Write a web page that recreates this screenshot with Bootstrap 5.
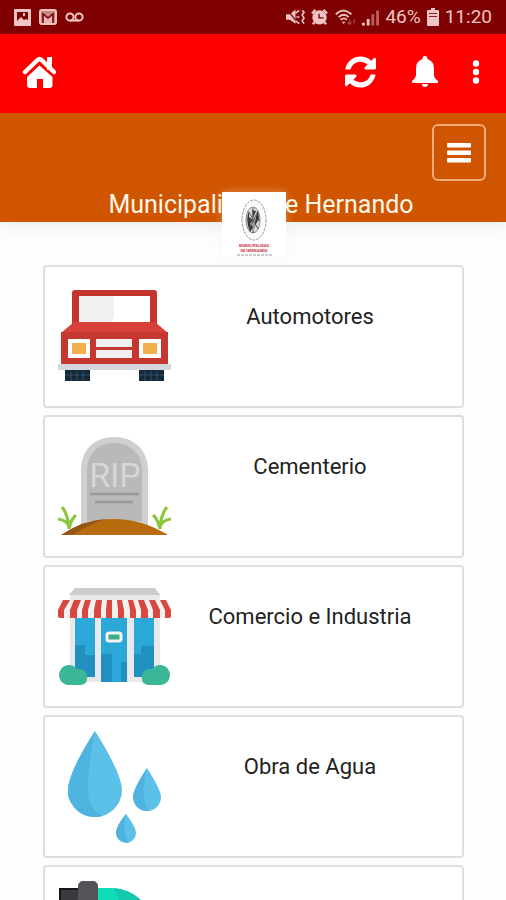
<!DOCTYPE html>
<html lang="es">
<head>
<meta charset="utf-8">
<meta name="viewport" content="width=device-width, initial-scale=1">
<title>Municipalidad de Hernando</title>
<link href="https://cdn.jsdelivr.net/npm/bootstrap@5.3.0/dist/css/bootstrap.min.css" rel="stylesheet">
<style>
  body { font-family: Roboto, "Liberation Sans", sans-serif; background: #fdfdfd; }
  svg { display: block; flex-shrink: 0; }
  .status-strip { height: 34px; background: #7f0000; color: #efc4c4; font-size: 19px; line-height: 34px; padding: 0 14px; }
  .status-icons { gap: 6px; }
  .app-bar { height: 79px; background: #ff0000; padding: 0 24px 4px 21px; }
  .app-bar .btn { color: #fff; line-height: 0; }
  .brand-bar { background: #d05500; box-shadow: 0 6px 16px rgba(0, 0, 0, .06); padding: 11px 20px 0; }
  .menu-toggle { width: 54px; height: 57px; border: 2px solid #f0ad7b; border-radius: 6px; color: #fff; }
  .brand-title { font-size: 25px; line-height: 32px; padding: 8px 0 1px 16px; color: #fff8ea; }
  .brand-logo { bottom: -35px; left: 50%; width: 64px; margin-left: -31px; background: #fff; box-shadow: 0 0 8px rgba(255, 240, 220, .35); }
  .service-list { padding: 43px 42px 0 43px; gap: 7px; scrollbar-width: none; }
  .service-list::-webkit-scrollbar { display: none; }
  .service-item { min-height: 143px; border: 2px solid #dedede; border-radius: 4px; padding: 13px; background: #fff; color: #222; font-size: 22px; line-height: 28px; }
  .service-name { padding-top: 23px; }
</style>
</head>
<body>
<div class="vh-100 d-flex flex-column overflow-hidden">
  <div class="status-strip d-flex align-items-center flex-shrink-0">
    <div class="d-flex align-items-center gap-2">
      <svg width="17" height="17" viewBox="0 0 17 17"><path fill="#efc4c4" fill-rule="evenodd" d="M1 0h15q1 0 1 1v15q0 1-1 1H1q-1 0-1-1V1q0-1 1-1zM3 3v9l4-4 3 3 2-1 2 1V3zM9 4h2v3H9z"/></svg>
      <svg width="18" height="16" viewBox="0 0 18 16"><rect x="1" y="1" width="16" height="14" rx="2" fill="#c98787" stroke="#efc4c4" stroke-width="2"/><path d="M4 14V5l5 4 5-4v9" fill="#e6b4b4" stroke="#7f0000" stroke-width="1.600"/></svg>
      <svg width="19" height="10" viewBox="0 0 19 10" fill="none" stroke="#efc4c4" stroke-width="2"><circle cx="5" cy="5" r="3.600"/><circle cx="14" cy="5" r="3.600"/><path d="M5 8.600h9"/></svg>
    </div>
    <div class="status-icons d-flex align-items-center ms-auto">
      <svg width="19" height="18" viewBox="0 0 20 18" fill="#efc4c4"><path d="M0 6h4l6-5v15l-6-4H0z"/><path d="M1 1l12 15" stroke="#7f0000" stroke-width="1.400"/><path d="M10 5l4-3M11 9h3M10 13l4 3M17 2l2 2-2 3 2 3-2 3 2 3" fill="none" stroke="#efc4c4" stroke-width="1.700"/></svg>
      <svg width="17" height="18" viewBox="0 0 19 18"><circle cx="9.500" cy="9.500" r="8" fill="#efc4c4"/><path d="M1 5l4-4M14 1l4 4M4 15l-2 2M15 15l2 2" stroke="#efc4c4" stroke-width="2.500"/><path d="M9 5.500V10h5" fill="none" stroke="#7f0000" stroke-width="1.500"/></svg>
      <svg width="22" height="19" viewBox="0 0 24 19" fill="none" stroke="#efc4c4" stroke-width="2"><path d="M2 6q8-8 17 0M5 9q6-5 11 0M7 12q4-3 7 0"/><path d="M8.500 14h4l-2 2.500z" fill="#efc4c4" stroke="none"/><path d="M17 12v5M15 15l2 2 2-2M22 16v-5" stroke="#a84a4a" stroke-width="1.400"/></svg>
      <svg width="17" height="18" viewBox="0 0 18 18"><path fill="#efc4c4" d="M0 15h3v3H0zM5 11h3v7H5z"/><path fill="#b75f5f" d="M10 6h3v12h-3zM15 2h3v16h-3z"/></svg>
      <span>46%</span>
      <svg width="12" height="18" viewBox="0 0 12 18"><path fill="#efc4c4" d="M4 0h4v2h3q1 0 1 1v14q0 1-1 1H1q-1 0-1-1V3q0-1 1-1h3z"/><path fill="#8e2020" d="M2 5h8v1H2zM2 8h8v1H2z"/></svg>
      <span>11:20</span>
    </div>
  </div>

  <nav class="app-bar d-flex align-items-center flex-shrink-0" aria-label="Principal">
    <a class="btn border-0 p-0" href="#" aria-label="Inicio">
      <svg width="37" height="36" viewBox="0 0 37 36"><path d="M26 3h5v13h-5z" fill="#fff"/><path d="M4 18L16.500 6Q18.500 4 20.500 6L33 18" fill="none" stroke="#fff" stroke-width="4.500" stroke-linecap="round"/><path fill="#fff" d="M18.500 11.500L31.500 23v8q0 3-3 3H22v-9h-6v9H9q-3 0-3-3v-8z"/></svg>
    </a>
    <button class="btn border-0 p-0 ms-auto" type="button" aria-label="Actualizar">
      <svg width="31" height="32" viewBox="0 0 1536 1536" fill="currentColor"><path d="M1511 928q0 5-1 7-64 268-268 434.500T764 1536q-146 0-282.500-55T238 1324l-129 129q-19 19-45 19t-45-19-19-45V960q0-26 19-45t45-19h448q26 0 45 19t19 45-19 45l-137 137q71 66 161 102t187 36q134 0 250-65t186-179q11-17 53-117 8-23 30-23h192q13 0 22.500 9.500t9.500 22.500zM1536 128v448q0 26-19 45t-45 19h-448q-26 0-45-19t-19-45 19-45l138-138Q969 256 768 256q-134 0-250 65T332 500q-11 17-53 117-8 23-30 23H50q-13 0-22.500-9.500T18 608v-7q65-268 270-434.500T768 0q146 0 284 55.500T1297 212l130-129q19-19 45-19t45 19 19 45z"/></svg>
    </button>
    <button class="btn border-0 p-0 ms-4" type="button" aria-label="Notificaciones">
      <svg class="ms-2 ps-1" width="30" height="31" viewBox="0 0 26 31" fill="currentColor"><path d="M13 0q2.500 0 2.500 3Q22 5 22 13v6q0 3 4 6v2H0v-2q4-3 4-6v-6q0-8 6.500-10Q10.500 0 13 0zM10 28h6q0 3-3 3t-3-3z"/></svg>
    </button>
    <button class="btn border-0 p-0 ms-4" type="button" aria-label="Más opciones">
      <svg class="ms-2" width="12" height="24" viewBox="0 0 12 24" fill="currentColor"><circle cx="6" cy="3.500" r="3.200"/><circle cx="6" cy="12" r="3.200"/><circle cx="6" cy="20.500" r="3.200"/></svg>
    </button>
  </nav>

  <header class="brand-bar position-relative z-1 flex-shrink-0">
    <div class="d-flex justify-content-end">
      <button class="menu-toggle btn p-0 d-flex align-items-center justify-content-center" type="button" aria-label="Menú">
        <svg width="24" height="20" viewBox="0 0 24 20" fill="currentColor"><rect width="24" height="4.500" rx="1"/><rect y="7.500" width="24" height="4.500" rx="1"/><rect y="15" width="24" height="4.500" rx="1"/></svg>
      </button>
    </div>
    <h1 class="brand-title text-center fw-normal m-0">Municipalidad de Hernando</h1>
    <div class="brand-logo position-absolute">
      <svg width="64" height="65" viewBox="0 0 64 65">
        <ellipse cx="32" cy="28" rx="12" ry="20" fill="#fafafa" stroke="#999" stroke-width="1" stroke-dasharray="3 1"/>
        <ellipse cx="31" cy="28" rx="7" ry="13" fill="#ddd" stroke="#888"/>
        <path d="M27 19q-4 9 1 21l3-5-3-3 3-4-4-3zM30 18l1 8 3-7zM34 24l2-5 1 8-3 5-2 5z" fill="#333"/>
        <path d="M31 16v25M25 28h13M27 20l9 17M36 19l-9 18" stroke="#555" stroke-width="1"/>
        <g text-anchor="middle" font-family="Roboto, sans-serif" font-weight="700" fill="#cc3347" font-size="4"><text x="32" y="55">MUNICIPALIDAD</text><text x="32" y="60">DE HERNANDO</text></g>
        <path d="M15 63h35" stroke="#999" stroke-dasharray="3 1"/>
      </svg>
    </div>
  </header>

  <main class="service-list d-flex flex-column flex-grow-1 overflow-auto">
    <a class="service-item d-flex flex-shrink-0 text-decoration-none" href="#">
      <svg width="113" height="113" viewBox="0 0 113 113">
        <path fill="#14293a" d="M7 89h25v12H7zM81 89h25v12H81z"/><path d="M7 95h25M81 95h25M13 91v10M19 91v10M25 91v10M87 91v10M93 91v10M99 91v10" stroke="#34506a" stroke-width="1"/>
        <path fill="#c5352e" d="M17 10h79q3 0 3 3v34H14V13q0-3 3-3z"/><path fill="#fff" d="M21 16h71v26H21z"/><path fill="#f0f1f3" d="M21 16h35v21l-3 5H21z"/>
        <path fill="#d8413a" d="M16 42h81l13 11H3z"/><path fill="#c63730" d="M3 52h107v33H3z"/>
        <path fill="#fff" d="M10 59h22v19H10zM81 59h22v19H81z"/><path fill="#f4b04d" d="M14 63h14v11H14zM85 63h14v11H85z"/>
        <path fill="#f0f0f3" d="M38 59h36v8H38zM38 70h36v8H38z"/><rect y="84" width="113" height="6" fill="#d4d7db"/>
      </svg>
      <span class="service-name flex-grow-1 text-center">Automotores</span>
    </a>
    <a class="service-item d-flex flex-shrink-0 text-decoration-none" href="#">
      <svg width="113" height="113" viewBox="0 0 113 113">
        <path fill="#cfcfcf" d="M23 96V41C23 19 37 7 56 7s34 12 34 34v55z"/><path fill="#b9b9b9" d="M29 91V41C29 23 41 13 56 13s28 10 28 28v50z"/>
        <text x="57" y="57" text-anchor="middle" font-family="Roboto, sans-serif" font-size="34" font-weight="400" fill="#d6d6d6">RIP</text>
        <path d="M32 64h49M37 72h38" stroke="#999" stroke-width="2.500"/>
        <path d="M11 99Q10 84 4 77M11 96Q8 90 0 89M11 99Q13 89 18 85M102 99Q103 84 109 77M102 96Q105 90 113 89M102 99Q100 89 95 85" fill="none" stroke="#8dc63f" stroke-width="3.200"/>
        <path fill="#b86b0c" d="M3 105Q28 89 56 89t54 16z"/><path fill="#955514" d="M3 105Q25 90 48 89 25 97 15 105z"/>
      </svg>
      <span class="service-name flex-grow-1 text-center">Cementerio</span>
    </a>
    <a class="service-item d-flex flex-shrink-0 text-decoration-none" href="#">
      <svg width="113" height="113" viewBox="0 0 113 113">
        <path fill="#e8e9eb" d="M12 13h90v89H12z"/><path fill="#ccc" d="M17 8h80l5 7H11z"/>
        <path fill="#2ba7d8" d="M17 38h20v59H17zM43 38h26v64H43zM76 38h20v59H76z"/><path fill="#218fc0" d="M17 65h10v10h10v22H17zM43 74h11v28H43zM63 82h6v20h-6zM76 74h7v-8h13v31H76z"/>
        <rect x="49" y="53" width="14" height="8" rx="2" fill="#3cad82" stroke="#f4f4f4" stroke-width="3"/>
        <path fill="#f1f1f2" d="M5 20h103l5 10v8H0v-8z"/>
        <path fill="#d9483f" d="M5 20h7L6 30v8H2q-2 0-2-2v-6zM16 20h7l-4 10v8h-7v-8zM27 20h6l-3 10v8h-6v-8zM38 20h6l-1 10v8h-7v-8zM49 20h5v18h-6V30zM59 20h5l2 10v8h-6v-8zM70 20h5l3 10v8h-6v-8zM80 20h6l4 10v8h-7v-8zM91 20h6l5 10v8h-7v-8zM102 20h6l5 10v6q0 2-2 2h-4v-8z"/>
        <path fill="#3ab796" d="M10 105A10 10 0 1 1 19 89q9-1 10 7t-6 9zM103 105A10 10 0 1 0 94 89q-9-1-10 7t6 9z"/>
      </svg>
      <span class="service-name flex-grow-1 text-center">Comercio e Industria</span>
    </a>
    <a class="service-item d-flex flex-shrink-0 text-decoration-none" href="#">
      <svg width="113" height="113" viewBox="0 0 113 113">
        <g fill="#5cc1e8"><path d="M37 1Q64 44 64 60A27 27 0 0 1 10 60Q10 44 37 1z"/><path d="M89 38Q103 60 103 67A14 14 0 0 1 75 67Q75 60 89 38z"/><path d="M68 84Q78 97 78 103A10 10 0 0 1 58 103Q58 97 68 84z"/></g>
        <g fill="#4fb3df"><path d="M37 1Q30 36 30 60 30 79 45 86 21 91 11 69 4 52 37 1z"/><path d="M89 38Q84 59 86 69 87 78 92 81 77 82 75 67 75 59 89 38z"/><path d="M68 84Q63 100 71 113 59 111 58 103 58 96 68 84z"/></g>
      </svg>
      <span class="service-name flex-grow-1 text-center">Obra de Agua</span>
    </a>
    <a class="service-item d-flex flex-shrink-0 text-decoration-none" href="#" aria-label="Servicio">
      <svg width="113" height="113" viewBox="0 0 113 113">
        <path fill="#0fdcb8" d="M38 8h15q28 0 45 33v70H38z"/><path fill="#14c9a9" d="M55 8q28 2 43 33v70H73Q72 33 55 8z"/>
        <path fill="#3c3a40" stroke="#171719" stroke-width="2" d="M2 9h22v50H2z"/><rect x="20" y="1" width="20" height="70" rx="5" fill="#56545b"/>
      </svg>
    </a>
  </main>
</div>
<script src="https://cdn.jsdelivr.net/npm/bootstrap@5.3.0/dist/js/bootstrap.bundle.min.js"></script>
</body>
</html>
